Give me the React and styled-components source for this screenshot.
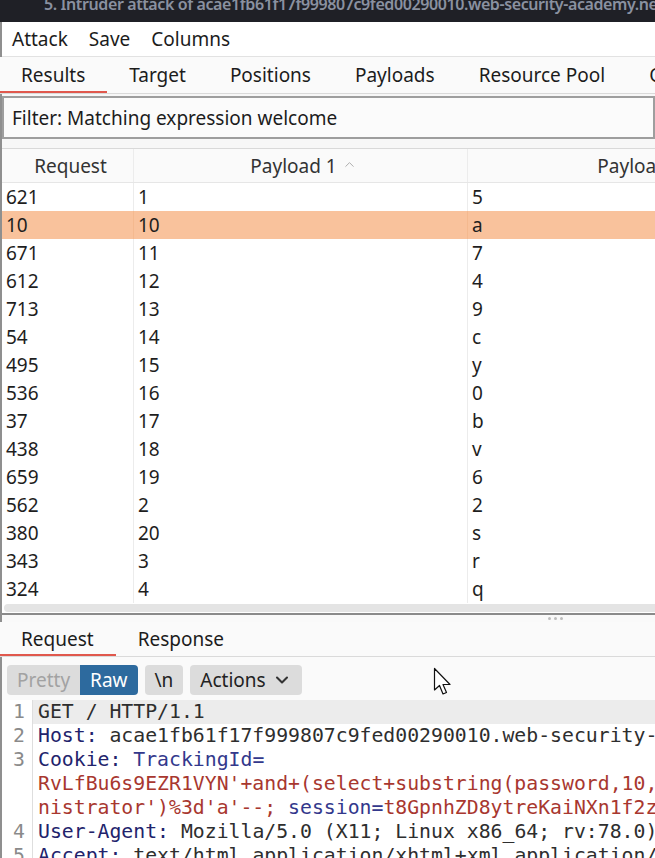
import React from 'react';
import styled, { createGlobalStyle } from 'styled-components';
import { ChevronUp, ChevronDown } from 'lucide-react';

const GlobalStyle = createGlobalStyle`
  html, body {
    margin: 0;
    padding: 0;
    background: #fff;
  }
  body {
    width: 655px;
    height: 858px;
    overflow: hidden;
    font-family: "Noto Sans", "Open Sans", sans-serif;
    color: #1c1c1c;
  }
`;

const Window = styled.div`
  position: relative;
  width: 655px;
  height: 858px;
  overflow: hidden;
  display: flex;
  flex-direction: column;
`;

const TitleBar = styled.div`
  flex: none;
  height: 22px;
  background: #1f2026;
  overflow: hidden;
  padding-left: 44px;
  white-space: nowrap;
  color: #8a91a0;
  font-size: 16px;
  font-weight: 600;
  line-height: 14px;
`;

const TitleText = styled.div`
  margin-top: -3.5px;
  letter-spacing: -0.4px;
`;

const Body = styled.div`
  flex: 1;
  display: flex;
  flex-direction: column;
  min-height: 0;
  background: #f7f7f7;
  border-left: 2px solid #8f8f8f;
`;

const MenuBar = styled.div`
  flex: none;
  height: 34px;
  display: flex;
  align-items: center;
  gap: 21px;
  padding-left: 10px;
  background: #fff;
  border-bottom: 1px solid #e2e2e2;
  font-size: 19px;
`;

const TabBar = styled.div`
  flex: none;
  height: ${(p) => p.h}px;
  display: flex;
  overflow: hidden;
  white-space: nowrap;
  margin-left: -3px;
  background: #fafafa;
  border-bottom: 1px solid #dadada;
`;

const Tab = styled.div`
  flex: none;
  display: flex;
  align-items: center;
  padding: 0 22px;
  font-size: 19px;
  color: #1c1c1c;
  box-shadow: ${(p) => (p.active ? 'inset 0 -2px 0 #e0584d' : 'none')};
`;

const FilterBox = styled.div`
  flex: none;
  margin-top: 2px;
  height: 43px;
  box-sizing: border-box;
  border: 2px solid #9e9e9e;
  background: #fbfbfb;
  display: flex;
  align-items: center;
  padding-left: 8px;
  font-size: 19px;
`;

const Table = styled.div`
  flex: none;
  margin-top: 9px;
  background: #fff;
  border-top: 1px solid #d9d9d9;
  border-bottom: 2px solid #8a8a8a;
  overflow: hidden;
`;

const Row = styled.div`
  display: grid;
  grid-template-columns: 132px 334px 340px;
  height: ${(p) => (p.head ? 34 : 28)}px;
  background: ${(p) => (p.head ? '#fafafa' : p.selected ? '#f9c29c' : '#fff')};
  border-bottom: ${(p) => (p.head ? '1px solid #e6e6e6' : 'none')};
  box-sizing: border-box;
  font-size: 19px;
  color: #1e1e1e;
`;

const Cell = styled.div`
  display: flex;
  align-items: center;
  justify-content: ${(p) => (p.head ? 'center' : 'flex-start')};
  gap: 5px;
  padding-left: ${(p) => (p.head ? 6 : 4)}px;
  border-right: 1px solid ${(p) => (p.selected ? '#f4b98f' : '#ececec')};
  white-space: nowrap;
  color: ${(p) => (p.head ? '#333' : '#1e1e1e')};

  svg {
    color: #a8a8a8;
    margin-top: -2px;
  }
`;

const ScrollTrack = styled.div`
  height: 10px;
  padding: 1px 0 1px 2px;
  box-sizing: border-box;
  background: #fff;
`;

const ScrollThumb = styled.div`
  height: 8px;
  width: 700px;
  border-radius: 4px;
  background: #e4e4e4;
`;

const Splitter = styled.div`
  flex: none;
  height: 7px;
  display: flex;
  justify-content: flex-start;
  padding-left: 546px;
  gap: 3px;
  align-items: center;
  background: #f9f9f9;
`;

const Dot = styled.span`
  width: 3px;
  height: 3px;
  border-radius: 50%;
  background: #bdbdbd;
`;

const Toolbar = styled.div`
  flex: none;
  height: 43px;
  box-sizing: border-box;
  padding: 8px 0 0 5px;
  display: flex;
  gap: 7px;
  background: #fafafa;
`;

const Segmented = styled.div`
  display: flex;
  height: 30px;
  border-radius: 4px;
  overflow: hidden;
`;

const Button = styled.div`
  height: 30px;
  box-sizing: border-box;
  display: flex;
  align-items: center;
  gap: 6px;
  padding: 0 ${(p) => p.px || 10}px;
  border-radius: ${(p) => (p.flat ? 0 : 4)}px;
  font-size: 19px;
  background: ${(p) => (p.primary ? '#2d6a9e' : '#dcdcdc')};
  color: ${(p) => (p.primary ? '#fff' : p.muted ? '#a2a2a2' : '#222')};

  svg {
    color: #333;
  }
`;

const Editor = styled.div`
  flex: 1;
  background: #fff;
  overflow: hidden;
  font-family: "DejaVu Sans Mono", "Liberation Mono", monospace;
  font-size: 19.8px;
  line-height: 24px;
`;

const Line = styled.div`
  display: flex;
  height: 24px;
`;

const Gutter = styled.div`
  flex: none;
  width: 31px;
  box-sizing: border-box;
  padding-right: 7px;
  text-align: right;
  color: #8a8a8a;
  border-right: 1px solid #dedede;
`;

const Code = styled.div`
  flex: 1;
  padding-left: 5px;
  white-space: pre;
  overflow: hidden;
  color: #2e2e2e;
  background: ${(p) => (p.current ? '#ececec' : 'transparent')};
`;

const Key = styled.span`
  color: #22236c;
`;

const Name = styled.span`
  color: #33388c;
`;

const Val = styled.span`
  color: #a8372f;
`;

const Pointer = styled.svg`
  position: absolute;
  left: 433px;
  top: 667px;
`;

const rows = [
  ['621', '1', '5'],
  ['10', '10', 'a'],
  ['671', '11', '7'],
  ['612', '12', '4'],
  ['713', '13', '9'],
  ['54', '14', 'c'],
  ['495', '15', 'y'],
  ['536', '16', '0'],
  ['37', '17', 'b'],
  ['438', '18', 'v'],
  ['659', '19', '6'],
  ['562', '2', '2'],
  ['380', '20', 's'],
  ['343', '3', 'r'],
  ['324', '4', 'q'],
];

const tabs = ['Results', 'Target', 'Positions', 'Payloads', 'Resource Pool', 'Options'];

export default function App() {
  return (
    <Window>
      <GlobalStyle />
      <TitleBar>
        <TitleText>5. Intruder attack of acae1fb61f17f999807c9fed00290010.web-security-academy.net</TitleText>
      </TitleBar>
      <Body>
        <MenuBar>
          <span>Attack</span>
          <span>Save</span>
          <span>Columns</span>
        </MenuBar>
        <TabBar h={36}>
          {tabs.map((t, i) => (
            <Tab key={t} active={i === 0}>{t}</Tab>
          ))}
        </TabBar>
        <FilterBox>Filter: Matching expression welcome</FilterBox>
        <Table>
          <Row head>
            <Cell head>Request</Cell>
            <Cell head>Payload 1 <ChevronUp size={15} strokeWidth={1.5} /></Cell>
            <Cell head>Payload 2</Cell>
          </Row>
          {rows.map((r, i) => (
            <Row key={i} selected={i === 1}>
              {r.map((c, j) => (
                <Cell key={j} selected={i === 1}>{c}</Cell>
              ))}
            </Row>
          ))}
          <ScrollTrack>
            <ScrollThumb />
          </ScrollTrack>
        </Table>
        <Splitter>
          <Dot />
          <Dot />
          <Dot />
        </Splitter>
        <TabBar h={34}>
          <Tab active>Request</Tab>
          <Tab>Response</Tab>
        </TabBar>
        <Toolbar>
          <Segmented>
            <Button flat muted>Pretty</Button>
            <Button flat primary>Raw</Button>
          </Segmented>
          <Button px={10}>\n</Button>
          <Button px={10}>Actions <ChevronDown size={20} strokeWidth={2.5} /></Button>
        </Toolbar>
        <Editor>
          <Line>
            <Gutter>1</Gutter>
            <Code current>GET / HTTP/1.1</Code>
          </Line>
          <Line>
            <Gutter>2</Gutter>
            <Code><Key>Host:</Key> acae1fb61f17f999807c9fed00290010.web-security-academy.net</Code>
          </Line>
          <Line>
            <Gutter>3</Gutter>
            <Code><Key>Cookie:</Key> <Name>TrackingId=</Name></Code>
          </Line>
          <Line>
            <Gutter />
            <Code><Val>RvLfBu6s9EZR1VYN'+and+(select+substring(password,10,1)+from+users</Val></Code>
          </Line>
          <Line>
            <Gutter />
            <Code><Val>nistrator')%3d'a'--;</Val> <Name>session=</Name><Val>t8GpnhZD8ytreKaiNXn1f2zq</Val></Code>
          </Line>
          <Line>
            <Gutter>4</Gutter>
            <Code><Key>User-Agent:</Key> Mozilla/5.0 (X11; Linux x86_64; rv:78.0) Gecko</Code>
          </Line>
          <Line>
            <Gutter>5</Gutter>
            <Code><Key>Accept:</Key> text/html,application/xhtml+xml,application/xml</Code>
          </Line>
        </Editor>
      </Body>
      <Pointer width="22" height="30" viewBox="0 0 22 30">
        <path
          d="M1.5 1.5 L1.5 23 L6.5 18.5 L10 27 L13.5 25.5 L10 17.5 L17 17.5 Z"
          fill="#fff"
          stroke="#111"
          strokeWidth="1.2"
          strokeLinejoin="round"
        />
      </Pointer>
    </Window>
  );
}
